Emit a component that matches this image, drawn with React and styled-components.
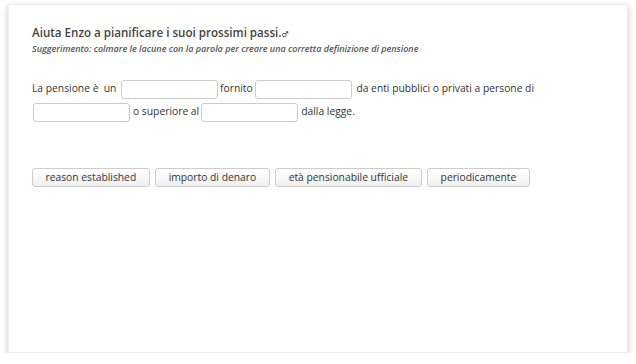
import React from 'react';
import styled, { createGlobalStyle } from 'styled-components';

const Global = createGlobalStyle`
    body {
        margin: 0;
        background: #ffffff;
        font-family: 'Open Sans', 'DejaVu Sans', sans-serif;
    }
`;

const Page = styled.div`
    padding: 4px 8px 0 8px;
`;

const Card = styled.div`
    width: 620px;
    height: 349px;
    box-sizing: border-box;
    background: #ffffff;
    border: 1px solid #eeeeee;
    box-shadow: 0 2px 6px rgba(0, 0, 0, 0.22);
    padding: 20px 23px;
    color: #333333;
`;

const Title = styled.div`
    font-size: 11.6px;
    font-weight: 600;
    color: #444444;
    line-height: 16px;
`;

const Mark = styled.span`
    font-size: 8px;
    font-weight: 400;
`;

const Hint = styled.div`
    font-size: 9px;
    font-style: italic;
    font-weight: 600;
    color: #555555;
    line-height: 13px;
`;

const Sentence = styled.div`
    margin-top: 22px;
    font-size: 10.3px;
    line-height: 23px;
    color: #333333;
`;

const Blank = styled.input`
    width: 97px;
    height: 19px;
    box-sizing: border-box;
    border: 1px solid #cccccc;
    border-radius: 3px;
    margin: 0 ${(p) => p.$right ?? 2}px 0 ${(p) => p.$left ?? 2}px;
    padding: 0 4px;
    vertical-align: middle;
    font-family: inherit;
`;

const Choices = styled.div`
    display: flex;
    gap: 5.5px;
    margin-top: 45px;
`;

const Choice = styled.button`
    height: 19px;
    padding: 0 12.5px;
    border: 1px solid #cccccc;
    border-radius: 3px;
    background: linear-gradient(#ffffff, #f0f0f0);
    font-family: inherit;
    font-size: 10.3px;
    color: #333333;
    line-height: 17px;
`;

const words = [
    'reason established',
    'importo di denaro',
    'età pensionabile ufficiale',
    'periodicamente',
];

const App = () => {
    return (
        <Page>
            <Global />
            <Card>
                <Title>
                    Aiuta Enzo a pianificare i suoi prossimi passi.<Mark>♂</Mark>
                </Title>
                <Hint>
                    Suggerimento: colmare le lacune con la parola per creare una corretta definizione di pensione
                </Hint>
                <Sentence>
                    La pensione è&nbsp; un <Blank />fornito<Blank />&nbsp;da enti pubblici o privati a persone di
                    <br />
                    <Blank $left={1} $right={3} />o superiore al<Blank $right={3} />dalla legge.
                </Sentence>
                <Choices>
                    {words.map((w) => (
                        <Choice key={w}>{w}</Choice>
                    ))}
                </Choices>
            </Card>
        </Page>
    );
};

export default App;
